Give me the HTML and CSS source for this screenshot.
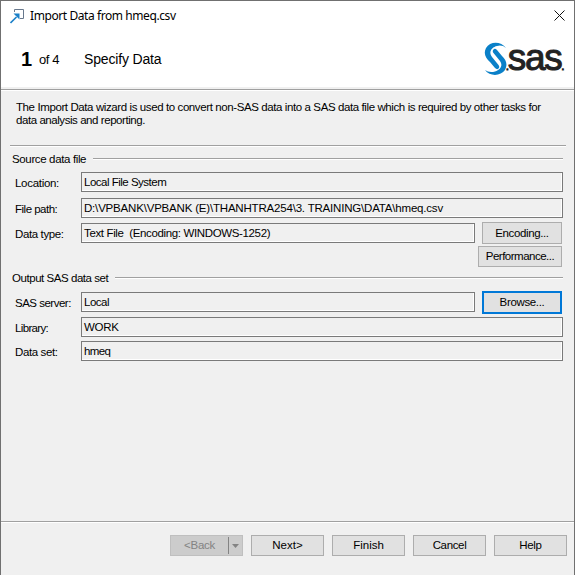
FILE: index.html
```html
<!DOCTYPE html>
<html lang="en">
<head>
<meta charset="utf-8">
<title>Import Data</title>
<link rel="stylesheet" href="styles.css">
</head>
<body>
<main class="window">
  <header class="header">
    <div class="titlebar">
      <svg class="app-icon" width="16" height="16" viewBox="0 0 16 16"><path d="M4.500 4V1.500h9v9H10" fill="none" stroke="#68788c"/><path d="M.5 15L6.500 9" stroke="#1b80c8" stroke-width="1.600"/><path d="M3.500 5.500h6v6z" fill="#1b80c8"/></svg>
      <h1 class="title">Import Data from hmeq.csv</h1>
      <svg class="close" width="11" height="11" viewBox="0 0 11 11"><path d="M.5.5l10 10M10.500.5l-10 10" stroke="#111" fill="none"/></svg>
    </div>
    <div class="step">
      <b class="step-number">1</b><span class="step-total">of 4</span><span class="step-name">Specify Data</span>
      <div class="logo">
        <svg width="24" height="34" viewBox="0 0 24 34"><path d="M22 6C17-1 6-1 2 6C-1 12 2 16 6 20L11 26Q13 28 14.500 26.500Q16 25 14.500 23L8 15C4 10 8 5 13 4Q18 2.500 22 6Z" fill="#0a80c8"/><path d="M1 28C6 35 17 34 21 28C24 22 22 18 18 14L13 8Q11 6 9.500 7.500Q8 9 9.500 11L16 19C19 23 17 28 11 29.500Q5 31 1 28Z" fill="#0a80c8"/></svg>
        <span class="logo-text"><i class="dot">.</i>sas<i class="dot">.</i></span>
      </div>
    </div>
  </header>
  <section class="content">
    <p class="intro"><span class="intro-first">The Import Data wizard is used to convert non-SAS data into a SAS data file which is required by other tasks for</span><br><span class="intro-second">data analysis and reporting.</span></p>
    <hr class="rule">
    <h2 class="group"><span class="t-source">Source data file</span></h2>
    <div class="row location"><label><span class="t-location">Location:</span></label><div class="field"><span class="t-system">Local File System</span></div></div>
    <div class="row path"><label><span class="t-path">File path:</span></label><div class="field"><span class="t-file">D:\VPBANK\VPBANK (E)\THANHTRA254\3. TRAINING\DATA\hmeq.csv</span></div></div>
    <div class="row type"><label><span class="t-type">Data type:</span></label><div class="field short"><span class="t-text">Text File&nbsp; (Encoding: WINDOWS-1252)</span></div><button class="encoding"><span class="t-encoding">Encoding...</span></button></div>
    <div class="extra"><button class="performance"><span class="t-performance">Performance...</span></button></div>
    <h2 class="group output"><span class="t-output">Output SAS data set</span></h2>
    <div class="row server"><label><span class="t-server">SAS server:</span></label><div class="field short"><span class="t-local">Local</span></div><button class="browse"><span class="t-browse">Browse...</span></button></div>
    <div class="row library"><label><span class="t-library">Library:</span></label><div class="field"><span class="t-work">WORK</span></div></div>
    <div class="row dataset"><label><span class="t-dataset">Data set:</span></label><div class="field"><span class="t-hmeq">hmeq</span></div></div>
  </section>
  <footer class="footer">
    <button class="back" disabled><span class="back-label">&lt;Back</span><span class="split"><svg width="7" height="4" viewBox="0 0 7 4"><path d="M0 0h7L3.500 4z" fill="#838383"/></svg></span></button>
    <button class="next">Next&gt;</button><button class="finish">Finish</button><button class="cancel">Cancel</button><button class="help">Help</button>
  </footer>
</main>
</body>
</html>
```
FILE: styles.css
```css
* { box-sizing: border-box; }
body { margin: 0; font: 11.5px/13px "Liberation Sans", Arial, sans-serif; color: #000; }
.window { width: 575px; height: 575px; display: flex; flex-direction: column; background: #f0f0f0; border: 1px solid #707070; border-bottom: 0; overflow: hidden; }
.header { height: 90px; flex: none; background: #fff; border-bottom: 1px solid #fff; box-shadow: inset 0 -1px #a0a0a0, inset 0 -3px #f0f0f0; }
.titlebar { display: flex; align-items: center; height: 29px; padding: 0 9px; }
.title { margin: 0 0 0 4px; font: 12px/16px "Noto Sans", sans-serif; letter-spacing: -.42px; }
.close { margin-left: auto; }
.step { height: 58px; display: flex; align-items: center; padding-left: 20px; font-size: 14px; }
.step-number { width: 18px; font-size: 20px; }
.step-total { width: 45px; font-size: 13px; letter-spacing: -.4px; }
.step-name { font-size: 14px; letter-spacing: -.17px; }
.logo { display: flex; margin: 6px 8px 0 auto; width: 82px; }
.logo svg { flex: none; }
.logo-text { margin-left: -2px; font: 37px/32px "Liberation Sans", Arial, sans-serif; letter-spacing: -1.3px; color: #222; -webkit-text-stroke: 1px #222; white-space: nowrap; }
.dot { font-size: 10px; font-style: normal; letter-spacing: -1px; }
.content { flex: 1; padding: 10px 11px 0 10px; }
.intro { margin: 0 0 0 5px; white-space: nowrap; height: 44px; }
.rule { margin: 0 -3px 0 -1px; border: 0; height: 2px; background: #a0a0a0; border-bottom: 1px solid #fff; }
.group { margin: 5px 0 0 1px; height: 15px; display: flex; align-items: center; gap: 7px; font: inherit; white-space: nowrap; }
.group::after { content: ""; flex: 1; align-self: flex-start; margin-top: 6px; height: 1px; background: #a0a0a0; box-shadow: 0 1px #fff; }
.row { display: flex; height: 20px; }
.row label { width: 70px; flex: none; padding: 5px 0 0 4px; white-space: nowrap; }
.field { flex: 1; border: 1px solid #7a7a7a; box-shadow: inset -1px -1px #fff; padding: 3px 0 0 2px; white-space: pre; }
.field.short { flex: none; width: 394px; }
.location { margin-top: 5px; }
.path { margin-top: 6px; }
.type { margin-top: 5px; }
.extra { display: flex; justify-content: flex-end; padding-right: 1px; margin-top: 3px; }
button { font: inherit; color: #000; padding: 0; width: 73px; height: 21px; border: 1px solid #adadad; background: #e1e1e1; flex: none; white-space: nowrap; }
.encoding, .browse { width: 80px; height: 22px; margin: -1px 0 0 7px; }
.performance { width: 84px; }
.browse { height: 23px; border: 2px solid #0078d7; }
.output { margin-top: 4px; }
.server { margin-top: 6px; }
.library { margin-top: 5px; }
.dataset { margin-top: 4px; }
.footer { height: 54px; display: flex; justify-content: flex-end; gap: 8px; padding: 13px 7px 0 0; border-top: 1px solid #a0a0a0; box-shadow: inset 0 1px #fff; }
.back { display: flex; align-items: center; color: #838383; background: #ccc; border-color: #bfbfbf; letter-spacing: -.3px; }
.back-label { width: 57px; }
.split { display: flex; align-items: center; height: 17px; padding-left: 3px; border-left: 1px solid #838383; }
.cancel, .help { letter-spacing: -.35px; }

/* Tracking that gives each caption its compact dialog width */
.intro-first { letter-spacing: -.4px; }
.intro-second { letter-spacing: -.44px; }
.t-source, .t-text { letter-spacing: -.36px; }
.t-location { letter-spacing: -.3px; }
.t-file { letter-spacing: -.19px; }
.t-type, .t-dataset, .t-encoding { letter-spacing: -.38px; }
.t-browse { letter-spacing: -.35px; }
.t-system, .t-path, .t-server, .t-local, .t-performance { letter-spacing: -.5px; }
.t-output { letter-spacing: -.45px; }
.t-library, .t-hmeq { letter-spacing: -.65px; }
.t-work { letter-spacing: -.3px; }
```
